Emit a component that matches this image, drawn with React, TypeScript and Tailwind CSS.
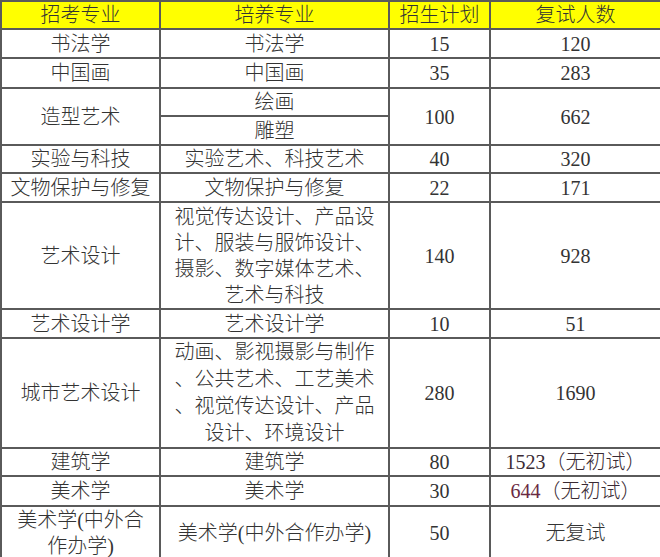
import React from "react";

const font = { fontFamily: '"Liberation Serif","Noto Sans CJK SC",serif' };

function Lines({ lines, lh = "leading-[26px]" }: { lines: string[]; lh?: string }) {
  return (
    <div className={lh}>
      {lines.map((l, i) => (
        <div key={i} className="whitespace-nowrap">
          {l}
        </div>
      ))}
    </div>
  );
}

const td = "border-2 border-[#5a5a5a] text-center align-middle p-0 whitespace-nowrap";

export default function App() {
  return (
    <div className="w-[660px] h-[557px] bg-white overflow-hidden" style={font}>
      <table className="table-fixed border-collapse text-[20px] font-light text-[#333333] leading-none w-[660px] border-t border-l border-[#333]">
        <colgroup>
          <col className="w-[159px]" />
          <col className="w-[229px]" />
          <col className="w-[101px]" />
          <col className="w-[171px]" />
        </colgroup>
        <tbody>
          <tr className="h-[28px] bg-[#ffff00]">
            <td className={td}>招考专业</td>
            <td className={td}>培养专业</td>
            <td className={td}>招生计划</td>
            <td className={td}>复试人数</td>
          </tr>
          <tr className="h-[29px]">
            <td className={td}>书法学</td>
            <td className={td}>书法学</td>
            <td className={td}>15</td>
            <td className={td}>120</td>
          </tr>
          <tr className="h-[30px]">
            <td className={td}>中国画</td>
            <td className={td}>中国画</td>
            <td className={td}>35</td>
            <td className={td}>283</td>
          </tr>
          <tr className="h-[28px]">
            <td className={td} rowSpan={2}>造型艺术</td>
            <td className={td}>绘画</td>
            <td className={td} rowSpan={2}>100</td>
            <td className={td} rowSpan={2}>662</td>
          </tr>
          <tr className="h-[29px]">
            <td className={td}>雕塑</td>
          </tr>
          <tr className="h-[28px]">
            <td className={td}>实验与科技</td>
            <td className={td}>实验艺术、科技艺术</td>
            <td className={td}>40</td>
            <td className={td}>320</td>
          </tr>
          <tr className="h-[29px]">
            <td className={td}>文物保护与修复</td>
            <td className={td}>文物保护与修复</td>
            <td className={td}>22</td>
            <td className={td}>171</td>
          </tr>
          <tr className="h-[107px]">
            <td className={td}>艺术设计</td>
            <td className={td}>
              <Lines lines={["视觉传达设计、产品设", "计、服装与服饰设计、", "摄影、数字媒体艺术、", "艺术与科技"]} />
            </td>
            <td className={td}>140</td>
            <td className={td}>928</td>
          </tr>
          <tr className="h-[29px]">
            <td className={td}>艺术设计学</td>
            <td className={td}>艺术设计学</td>
            <td className={td}>10</td>
            <td className={td}>51</td>
          </tr>
          <tr className="h-[108px]">
            <td className={td}>城市艺术设计</td>
            <td className={td}>
              <Lines
                lh="leading-[27px]"
                lines={["动画、影视摄影与制作", "、公共艺术、工艺美术", "、视觉传达设计、产品", "设计、环境设计"]}
              />
            </td>
            <td className={td}>280</td>
            <td className={td}>1690</td>
          </tr>
          <tr className="h-[28px]">
            <td className={td}>建筑学</td>
            <td className={td}>建筑学</td>
            <td className={td}>80</td>
            <td className={`${td} text-[#3a2a33]`}>1523（无初试）</td>
          </tr>
          <tr className="h-[30px]">
            <td className={td}>美术学</td>
            <td className={td}>美术学</td>
            <td className={td}>30</td>
            <td className={td}>
              <span className="text-[#6a2a42]">644</span>
              <span className="text-[#3a2a33]">（无初试）</span>
            </td>
          </tr>
          <tr className="h-[53px]">
            <td className={td}>
              <Lines lines={["美术学(中外合", "作办学)"]} />
            </td>
            <td className={td}>美术学(中外合作办学)</td>
            <td className={td}>50</td>
            <td className={td}>无复试</td>
          </tr>
        </tbody>
      </table>
    </div>
  );
}
